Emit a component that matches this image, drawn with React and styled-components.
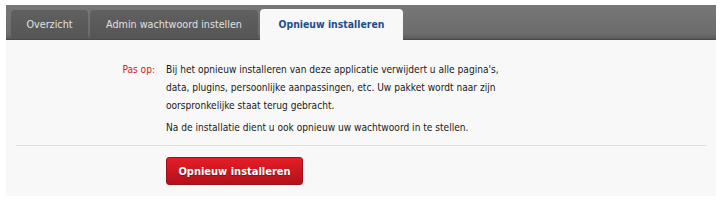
import React from "react";
import styled, { createGlobalStyle } from "styled-components";

const GlobalStyle = createGlobalStyle`
  body {
    margin: 0;
    background: #fff;
    font-family: "DejaVu Sans Condensed", "DejaVu Sans", sans-serif;
  }
`;

const Page = styled.div`
  padding: 5px 8px 0 6px;
`;

const Panel = styled.div`
  width: 710px;
`;

const TabBar = styled.div`
  display: flex;
  align-items: flex-end;
  gap: 2px;
  height: 35px;
  padding-left: 5px;
  box-sizing: border-box;
  background: linear-gradient(#777, #6c6c6c 85%, #5a5a5a);
  border-bottom: 1px solid #4a4a4a;
`;

const Tab = styled.div`
  height: ${(p) => (p.$active ? "31px" : "29px")};
  margin-bottom: ${(p) => (p.$active ? "-1px" : "0")};
  box-sizing: border-box;
  width: ${(p) => p.$width}px;
  display: flex;
  align-items: center;
  justify-content: center;
  padding-bottom: ${(p) => (p.$active ? "1px" : "0")};
  border-radius: 4px 4px 0 0;
  font-size: ${(p) => (p.$active ? "10.4px" : "10.7px")};
  font-weight: ${(p) => (p.$active ? "bold" : "normal")};
  color: ${(p) => (p.$active ? "#1d4f8c" : "#e0e0e0")};
  background: ${(p) =>
    p.$active ? "#f8f8f8" : "linear-gradient(#606060, #555)"};
`;

const Content = styled.div`
  background: #f8f8f8;
  padding: 21px 10px 11px 10px;
`;

const Row = styled.div`
  display: flex;
  gap: 11px;
`;

const Label = styled.div`
  width: 139px;
  text-align: right;
  color: #d0191f;
  font-size: 10.1px;
  line-height: 18px;
  flex-shrink: 0;
`;

const Body = styled.div`
  color: #1a1a1a;
  font-size: 10.1px;
  line-height: 18px;
  white-space: nowrap;
`;

const Para = styled.p`
  margin: 0 0 4px 0;
`;

const Divider = styled.hr`
  border: 0;
  border-top: 1px solid #dcdcdc;
  margin: 4px 0 11px 0;
`;

const ButtonRow = styled.div`
  padding-left: 150px;
`;

const DangerButton = styled.button`
  width: 137px;
  height: 28px;
  padding: 0;
  border: 1px solid #a0101a;
  border-radius: 3px;
  background: linear-gradient(#e41e26, #b3111b);
  color: #fff;
  font-family: "DejaVu Sans Condensed", "DejaVu Sans", sans-serif;
  font-weight: bold;
  font-size: 11px;
  text-shadow: 0 1px 1px rgba(0, 0, 0, 0.35);
  cursor: pointer;
`;

export default function App() {
  return (
    <>
      <GlobalStyle />
      <Page>
        <Panel>
          <TabBar>
            <Tab $width={77}>Overzicht</Tab>
            <Tab $width={168}>Admin wachtwoord instellen</Tab>
            <Tab $width={143} $active>
              Opnieuw installeren
            </Tab>
          </TabBar>
          <Content>
            <Row>
              <Label>Pas op:</Label>
              <Body>
                <Para>
                  Bij het opnieuw installeren van deze applicatie verwijdert u alle pagina's,
                  <br />
                  data, plugins, persoonlijke aanpassingen, etc. Uw pakket wordt naar zijn
                  <br />
                  oorspronkelijke staat terug gebracht.
                </Para>
                <Para>Na de installatie dient u ook opnieuw uw wachtwoord in te stellen.</Para>
              </Body>
            </Row>
            <Divider />
            <ButtonRow>
              <DangerButton>Opnieuw installeren</DangerButton>
            </ButtonRow>
          </Content>
        </Panel>
      </Page>
    </>
  );
}
